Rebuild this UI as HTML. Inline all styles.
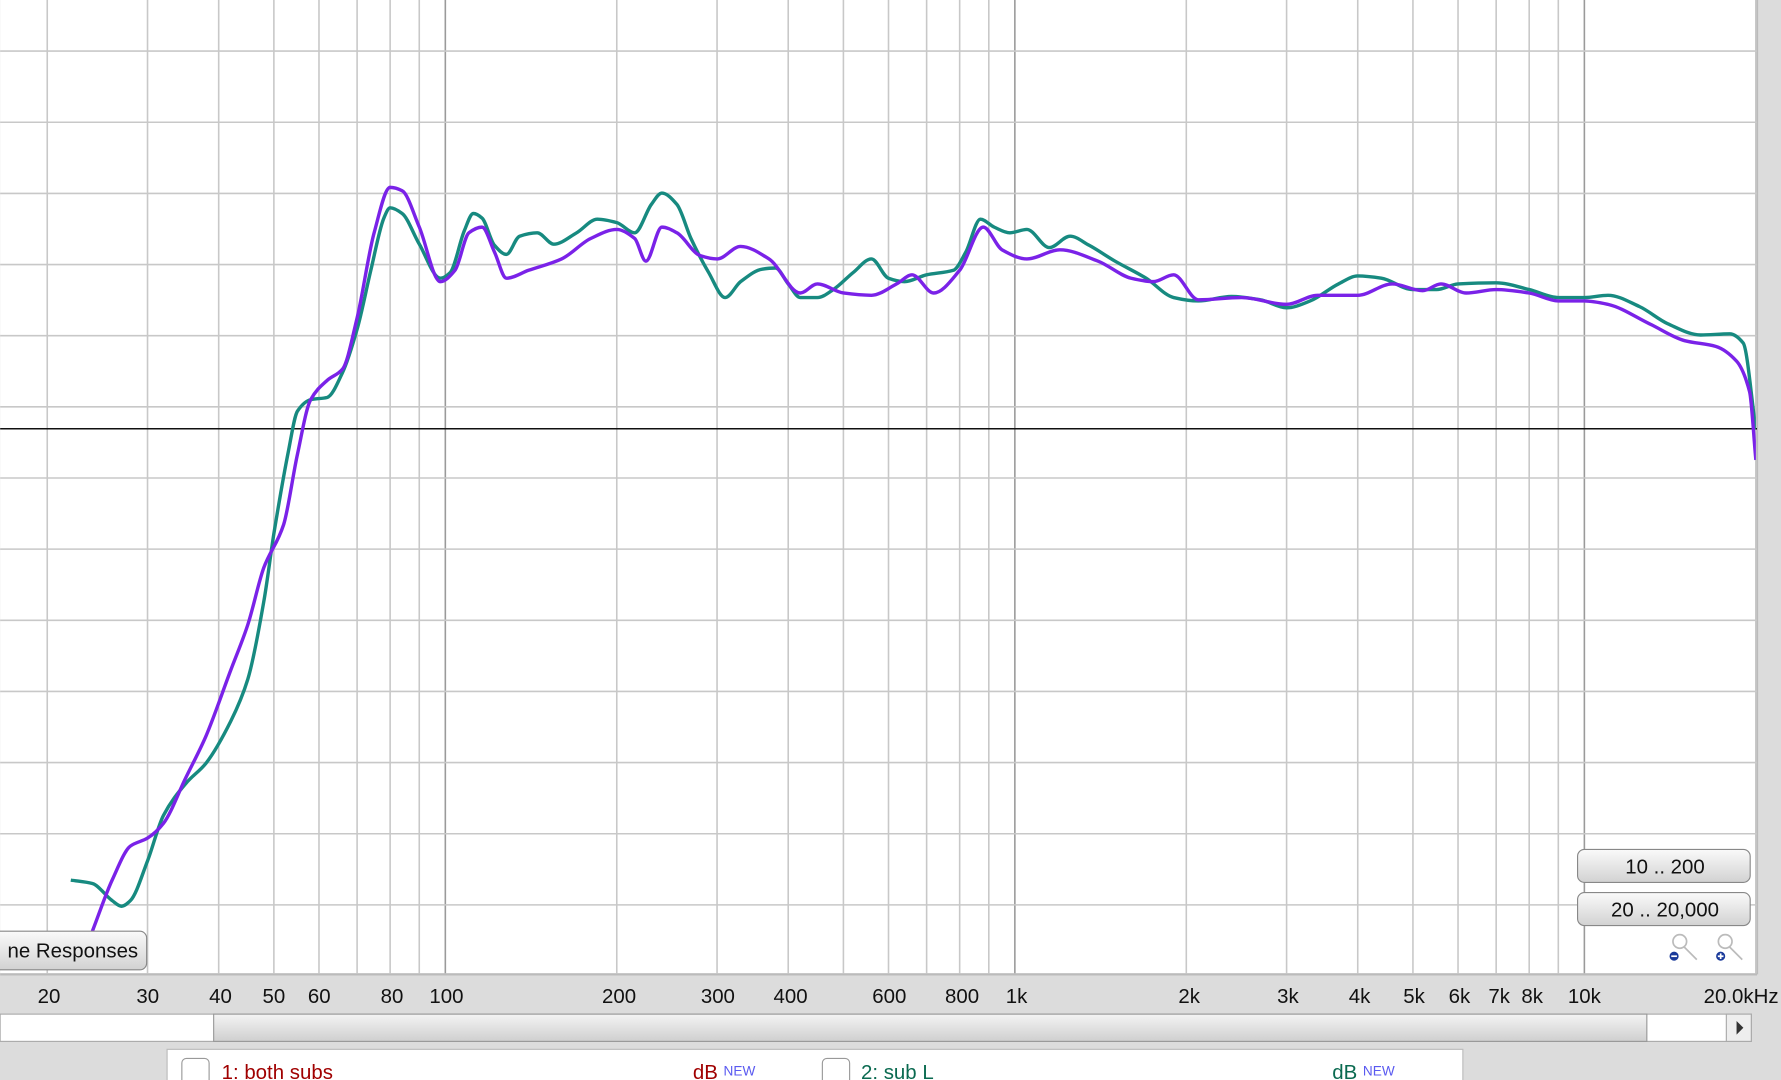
<!DOCTYPE html>
<html><head><meta charset="utf-8"><style>
html,body{margin:0;padding:0;background:#dcdcdc;overflow:hidden}
svg{display:block}
text{font-family:"Liberation Sans",sans-serif}
</style></head><body>
<svg id="s" width="1781" height="1080" viewBox="0 0 1568 951" xmlns="http://www.w3.org/2000/svg">
<defs>
<linearGradient id="btn" x1="0" y1="0" x2="0" y2="1"><stop offset="0" stop-color="#fafafa"/><stop offset="1" stop-color="#d2d2d2"/></linearGradient>
<linearGradient id="thumb" x1="0" y1="0" x2="0" y2="1"><stop offset="0" stop-color="#f4f4f4"/><stop offset="1" stop-color="#cfcfcf"/></linearGradient>
<clipPath id="pc"><rect x="0" y="0" width="1546" height="857"/></clipPath>
</defs>
<rect x="0" y="0" width="1568" height="951" fill="#dcdcdc"/>
<rect x="0" y="0" width="1547" height="857" fill="#fff"/>
<line x1="1547" y1="0" x2="1547" y2="858" stroke="#bbb" stroke-width="2"/>
<line x1="0" y1="858" x2="1547" y2="858" stroke="#bbb" stroke-width="2"/>
<g id="grid"></g>
<line x1="0" y1="377.5" x2="1547" y2="377.5" stroke="#111" stroke-width="1.3"/>
<g clip-path="url(#pc)">
<path id="teal" fill="none" stroke="#178a80" stroke-width="3"/>
<path id="purp" fill="none" stroke="#7a22e8" stroke-width="3"/>
</g>
<rect x="-10" y="820" width="139" height="34" rx="6" fill="url(#btn)" stroke="#888"/>
<text x="64" y="843" font-size="18" text-anchor="middle" fill="#111">ne Responses</text>
<rect x="1389" y="748" width="152" height="29" rx="6" fill="url(#btn)" stroke="#888"/>
<text x="1466" y="769" font-size="18" text-anchor="middle" fill="#111">10 .. 200</text>
<rect x="1389" y="786" width="152" height="29" rx="6" fill="url(#btn)" stroke="#888"/>
<text x="1466" y="807" font-size="18" text-anchor="middle" fill="#111">20 .. 20,000</text>
<g fill="none" stroke="#bbb" stroke-width="1.5">
<circle cx="1479" cy="829" r="6"/><line x1="1483" y1="834" x2="1494" y2="845"/>
<circle cx="1519" cy="829" r="6"/><line x1="1523" y1="834" x2="1534" y2="845"/>
</g>
<circle cx="1474" cy="842" r="4" fill="#1a3a9a"/><line x1="1471.5" y1="842" x2="1476.5" y2="842" stroke="#fff" stroke-width="1.5"/>
<circle cx="1515" cy="842" r="4" fill="#1a3a9a"/><path d="M1512.5 842h5M1515 839.5v5" stroke="#fff" stroke-width="1.5"/>
<g font-size="18" fill="#111" text-anchor="middle">
<text x="43" y="883">20</text><text x="130" y="883">30</text><text x="194" y="883">40</text><text x="241" y="883">50</text><text x="281" y="883">60</text><text x="345" y="883">80</text><text x="393" y="883">100</text><text x="545" y="883">200</text><text x="632" y="883">300</text><text x="696" y="883">400</text><text x="783" y="883">600</text><text x="847" y="883">800</text><text x="895" y="883">1k</text><text x="1047" y="883">2k</text><text x="1134" y="883">3k</text><text x="1197" y="883">4k</text><text x="1245" y="883">5k</text><text x="1285" y="883">6k</text><text x="1320" y="883">7k</text><text x="1349" y="883">8k</text><text x="1395" y="883">10k</text>
<text x="1500" y="883" text-anchor="start">20.0kHz</text>
</g>
<rect x="0" y="893" width="1542" height="24" fill="#fff" stroke="#aaa"/>
<rect x="188" y="893" width="1262" height="24" fill="url(#thumb)" stroke="#999"/>
<rect x="1520" y="893" width="22" height="24" fill="#eee" stroke="#aaa"/>
<path d="M1529 899l6 6-6 6z" fill="#333"/>
<rect x="147" y="924" width="1141" height="30" fill="#fff" stroke="#bbb"/>
<rect x="160" y="932" width="24" height="24" rx="4" fill="#fff" stroke="#999"/>
<rect x="724" y="932" width="24" height="24" rx="4" fill="#fff" stroke="#999"/>
<text x="195" y="950" font-size="18" fill="#a00000">1: both subs</text>
<text x="610" y="950" font-size="18" fill="#a00000">dB</text>
<text x="637" y="947" font-size="12" fill="#5a5af0">NEW</text>
<text x="758" y="950" font-size="18" fill="#0a6a50">2: sub L</text>
<text x="1173" y="950" font-size="18" fill="#0a6a50">dB</text>
<text x="1200" y="947" font-size="12" fill="#5a5af0">NEW</text>
</svg>
<script>
var X=function(f){return 392+501.5*Math.log10(f/100)};
var g=document.getElementById('grid'),h='';
var fs=[];
for(var d=10;d<=10000;d*=10)for(var k=1;k<10;k++)fs.push(d*k);
fs.push(20000);
fs.forEach(function(f){if(f<20||f>20000)return;var x=X(f);var maj=(f==100||f==1000||f==10000);
h+='<line x1="'+x+'" y1="0" x2="'+x+'" y2="857" stroke="'+(maj?'#9a9a9a':'#c8c8c8')+'" stroke-width="1.4"/>';});
for(var i=0;i<13;i++){var y=45+62.65*i;h+='<line x1="0" y1="'+y+'" x2="1547" y2="'+y+'" stroke="#c8c8c8" stroke-width="1.4"/>';}
g.innerHTML=h;
function path(p){var P=p.map(function(a){return [X(a[0]),a[1]]});var n=P.length,m=[];
for(var i=0;i<n;i++){var s;
 if(i==0)s=(P[1][1]-P[0][1])/(P[1][0]-P[0][0]);
 else if(i==n-1)s=(P[i][1]-P[i-1][1])/(P[i][0]-P[i-1][0]);
 else{var a=(P[i][1]-P[i-1][1])/(P[i][0]-P[i-1][0]),b=(P[i+1][1]-P[i][1])/(P[i+1][0]-P[i][0]);
  s=(a*b<=0)?0:2/(1/a+1/b);}
 m.push(s);}
var d='M'+P[0][0].toFixed(1)+' '+P[0][1];
for(var i=0;i<n-1;i++){var dx=(P[i+1][0]-P[i][0])/3;
d+=' C'+(P[i][0]+dx).toFixed(1)+' '+(P[i][1]+m[i]*dx).toFixed(1)+' '+(P[i+1][0]-dx).toFixed(1)+' '+(P[i+1][1]-m[i+1]*dx).toFixed(1)+' '+P[i+1][0].toFixed(1)+' '+P[i+1][1];}
return d;}
var T=[[22,775],[24,778],[26,793],[27,798],[28,793],[30,758],[32,718],[35,690],[38,672],[42,635],[45,598],[48,530],[50,470],[53,398],[55,362],[58,352],[62,350],[66,328],[70,290],[74,238],[78,192],[80,183],[84,188],[90,215],[98,245],[102,240],[108,203],[112,188],[116,192],[122,216],[128,224],[135,208],[145,205],[155,215],[170,205],[185,193],[200,196],[215,205],[230,180],[240,170],[255,180],[270,210],[290,240],[310,262],[330,248],[360,237],[380,236],[400,250],[420,262],[450,262],[480,255],[520,240],[560,228],[600,245],[640,248],[700,242],[780,238],[820,222],[870,193],[920,200],[980,205],[1050,202],[1150,218],[1250,208],[1350,216],[1500,230],[1700,245],[1900,262],[2100,265],[2400,261],[2700,264],[3000,271],[3300,265],[3700,250],[4000,243],[4400,245],[5000,255],[5500,255],[6000,250],[7000,249],[8000,255],[9000,262],[10000,262],[11000,260],[12500,270],[14000,285],[16000,295],[18000,294],[19000,302],[20000,378]];
var P=[[24,820],[26,775],[28,745],[30,738],[32,725],[35,685],[38,648],[42,590],[45,550],[48,500],[52,462],[55,400],[58,352],[62,335],[66,325],[70,280],[75,205],[80,165],[84,168],[90,200],[98,248],[104,238],[110,205],[116,200],[122,222],[128,245],[140,238],[160,228],[180,210],[200,202],[215,210],[225,230],[240,200],[255,205],[280,225],[300,228],[330,217],[370,228],[420,258],[450,250],[500,258],[560,260],[620,250],[660,242],[720,258],[800,238],[880,200],[950,220],[1050,228],[1200,220],[1400,230],[1600,245],[1750,248],[1900,242],[2100,264],[2500,262],[3000,268],[3400,260],[4000,260],[4600,250],[5200,256],[5600,250],[6200,258],[7000,255],[8000,258],[9000,265],[10000,265],[11000,268],[13000,285],[15000,300],[17000,305],[18500,318],[19500,345],[20000,405]];
document.getElementById('teal').setAttribute('d',path(T));
document.getElementById('purp').setAttribute('d',path(P));
</script>
</body></html>
